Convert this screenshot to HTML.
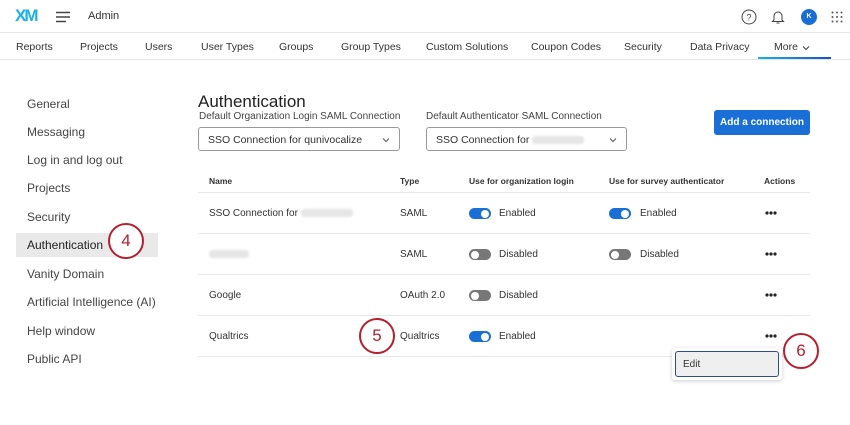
<!DOCTYPE html>
<html><head><meta charset="utf-8"><style>
*{box-sizing:border-box;margin:0;padding:0}
body{width:850px;height:425px;background:#fff;font-family:"Liberation Sans",sans-serif;color:#333;position:relative;overflow:hidden}
.a{position:absolute;white-space:nowrap}
.top{position:absolute;left:0;top:0;width:850px;height:33px;border-bottom:1px solid #e6e6e6}
.nav{position:absolute;left:0;top:33px;width:850px;height:27px;border-bottom:1px solid #e6e6e6;font-size:10.5px;color:#333}
.side{font-size:12px;color:#444}
.lbl{font-size:10px;color:#444}
.dd{position:absolute;height:24px;border:1px solid #999;border-radius:3px;font-size:10.5px;padding:6px 9px;color:#333}
.hr{position:absolute;left:198px;width:612px;height:1px;background:#e8e8e8}
.th{font-size:8.5px;font-weight:bold;color:#333}
.td{font-size:10px;color:#333}
.tg{position:absolute;width:22px;height:11px;border-radius:6px}
.tg.on{background:#1a6fd6}.tg.off{background:#777}
.tg::after{content:"";position:absolute;top:1.5px;width:8px;height:8px;border-radius:50%;background:#fff}
.tg.on::after{right:2px}.tg.off::after{left:2px}
.dots{position:absolute;width:12px;height:4px}
.circ{position:absolute;width:36px;height:36px;border:2.5px solid #b5202e;border-radius:50%;color:#b5202e;font-size:17px;text-align:center;line-height:31px;background:#fff}
.blur{display:inline-block;width:52px;height:8px;background:#e6e6e6;border-radius:3px;vertical-align:middle;filter:blur(1px)}
</style></head><body>
<div class="top">
<div class="a" style="left:15px;top:6px;font-size:17px;font-weight:bold;letter-spacing:-2px;color:#1ab0e8">XM</div>
<svg class="a" style="left:56px;top:11px" width="14" height="12"><path d="M0 1.5H14M0 6H14M0 10.5H10" stroke="#444" stroke-width="1.4"/></svg>
<div class="a" style="left:88px;top:10px;font-size:11px">Admin</div>
<svg class="a" style="left:741px;top:9px" width="16" height="16"><circle cx="8" cy="8" r="7" fill="none" stroke="#444" stroke-width="1"/><text x="8" y="11.5" font-size="9" text-anchor="middle" fill="#444" font-family="Liberation Sans">?</text></svg>
<svg class="a" style="left:771px;top:9px" width="14" height="16"><path d="M3 11V7a4 4 0 0 1 8 0v4l1.5 1.5h-11z M5.5 14h3" fill="none" stroke="#444" stroke-width="1"/></svg>
<div class="a" style="left:801px;top:9px;width:16px;height:16px;border-radius:50%;background:#1a6fd6;color:#fff;font-size:7px;font-weight:bold;text-align:center;line-height:16px">K</div>
<svg class="a" style="left:831px;top:11px" width="12" height="12" fill="#555"><circle cx="1.5" cy="1.5" r="1"/><circle cx="6" cy="1.5" r="1"/><circle cx="10.5" cy="1.5" r="1"/><circle cx="1.5" cy="6" r="1"/><circle cx="6" cy="6" r="1"/><circle cx="10.5" cy="6" r="1"/><circle cx="1.5" cy="10.5" r="1"/><circle cx="6" cy="10.5" r="1"/><circle cx="10.5" cy="10.5" r="1"/></svg>
</div>
<div class="nav">
<span class="a" style="left:16px;top:8px">Reports</span>
<span class="a" style="left:80px;top:8px">Projects</span>
<span class="a" style="left:145px;top:8px">Users</span>
<span class="a" style="left:201px;top:8px">User Types</span>
<span class="a" style="left:279px;top:8px">Groups</span>
<span class="a" style="left:341px;top:8px">Group Types</span>
<span class="a" style="left:426px;top:8px">Custom Solutions</span>
<span class="a" style="left:531px;top:8px">Coupon Codes</span>
<span class="a" style="left:624px;top:8px">Security</span>
<span class="a" style="left:690px;top:8px">Data Privacy</span>
<span class="a" style="left:774px;top:8px">More</span>
<svg class="a" style="left:802px;top:12px" width="8" height="6"><path d="M1 1.5L4 4.5L7 1.5" fill="none" stroke="#444" stroke-width="1.1"/></svg>
<div class="a" style="left:758px;top:24px;width:73px;height:2px;background:linear-gradient(90deg,#1ab0e8,#1a4fd6)"></div>
</div>
<div class="a" style="left:16px;top:233px;width:142px;height:24px;background:#e9e9e9"></div>
<div class="side">
<span class="a" style="left:27px;top:97px">General</span>
<span class="a" style="left:27px;top:125px">Messaging</span>
<span class="a" style="left:27px;top:153px">Log in and log out</span>
<span class="a" style="left:27px;top:181px">Projects</span>
<span class="a" style="left:27px;top:210px">Security</span>
<span class="a" style="left:27px;top:238px;color:#222">Authentication</span>
<span class="a" style="left:27px;top:267px">Vanity Domain</span>
<span class="a" style="left:27px;top:295px">Artificial Intelligence (AI)</span>
<span class="a" style="left:27px;top:324px">Help window</span>
<span class="a" style="left:27px;top:352px">Public API</span>
</div>
<div class="circ" style="left:108px;top:223px">4</div>
<div class="a" style="left:198px;top:92px;font-size:17px;color:#222">Authentication</div>
<div class="a lbl" style="left:199px;top:111px">Default Organization Login SAML Connection</div>
<div class="a lbl" style="left:426px;top:111px">Default Authenticator SAML Connection</div>
<div class="dd" style="left:198px;top:127px;width:202px">SSO Connection for qunivocalize<svg style="position:absolute;right:9px;top:9px" width="8" height="6"><path d="M1 1.5L4 4.5L7 1.5" fill="none" stroke="#555" stroke-width="1"/></svg></div>
<div class="dd" style="left:426px;top:127px;width:201px">SSO Connection for <span class="blur"></span><svg style="position:absolute;right:9px;top:9px" width="8" height="6"><path d="M1 1.5L4 4.5L7 1.5" fill="none" stroke="#555" stroke-width="1"/></svg></div>
<div class="a" style="left:714px;top:110px;width:96px;height:25px;background:#1a6fd6;border-radius:3px;color:#fff;font-size:10px;font-weight:bold;text-align:center;line-height:25px">Add a connection</div>
<div class="a th" style="left:209px;top:176px">Name</div>
<div class="a th" style="left:400px;top:176px">Type</div>
<div class="a th" style="left:469px;top:176px">Use for organization login</div>
<div class="a th" style="left:609px;top:176px">Use for survey authenticator</div>
<div class="a th" style="left:764px;top:176px">Actions</div>
<div class="hr" style="top:192px"></div><div class="hr" style="top:233px"></div><div class="hr" style="top:274px"></div><div class="hr" style="top:315px"></div><div class="hr" style="top:356px"></div>
<div class="a td" style="left:209px;top:208px">SSO Connection for <span class="blur"></span></div>
<div class="a td" style="left:400px;top:208px">SAML</div>
<div class="tg on" style="left:469px;top:208px"></div><div class="a td" style="left:499px;top:208px">Enabled</div>
<div class="tg on" style="left:609px;top:208px"></div><div class="a td" style="left:640px;top:208px">Enabled</div>
<svg class="dots" style="left:765px;top:211px"><circle cx="2" cy="2" r="1.6" fill="#222"/><circle cx="6" cy="2" r="1.6" fill="#222"/><circle cx="10" cy="2" r="1.6" fill="#222"/></svg>
<div class="a td" style="left:209px;top:249px"><span class="blur" style="width:40px"></span></div>
<div class="a td" style="left:400px;top:249px">SAML</div>
<div class="tg off" style="left:469px;top:249px"></div><div class="a td" style="left:499px;top:249px">Disabled</div>
<div class="tg off" style="left:609px;top:249px"></div><div class="a td" style="left:640px;top:249px">Disabled</div>
<svg class="dots" style="left:765px;top:252px"><circle cx="2" cy="2" r="1.6" fill="#222"/><circle cx="6" cy="2" r="1.6" fill="#222"/><circle cx="10" cy="2" r="1.6" fill="#222"/></svg>
<div class="a td" style="left:209px;top:290px">Google</div>
<div class="a td" style="left:400px;top:290px">OAuth 2.0</div>
<div class="tg off" style="left:469px;top:290px"></div><div class="a td" style="left:499px;top:290px">Disabled</div>
<svg class="dots" style="left:765px;top:293px"><circle cx="2" cy="2" r="1.6" fill="#222"/><circle cx="6" cy="2" r="1.6" fill="#222"/><circle cx="10" cy="2" r="1.6" fill="#222"/></svg>
<div class="a td" style="left:209px;top:331px">Qualtrics</div>
<div class="a td" style="left:400px;top:331px">Qualtrics</div>
<div class="tg on" style="left:469px;top:331px"></div><div class="a td" style="left:499px;top:331px">Enabled</div>
<svg class="dots" style="left:765px;top:334px"><circle cx="2" cy="2" r="1.6" fill="#222"/><circle cx="6" cy="2" r="1.6" fill="#222"/><circle cx="10" cy="2" r="1.6" fill="#222"/></svg>
<div class="a" style="left:672px;top:348px;width:110px;height:32px;background:#fff;box-shadow:0 1px 4px rgba(0,0,0,.2);border-radius:3px"></div>
<div class="a" style="left:675px;top:351px;width:104px;height:26px;background:#efefef;border:1.5px solid #2a4f8f;border-radius:3px;font-size:10px;padding:7px 7px">Edit</div>
<div class="circ" style="left:359px;top:318px">5</div>
<div class="circ" style="left:783px;top:333px">6</div>
</body></html>
